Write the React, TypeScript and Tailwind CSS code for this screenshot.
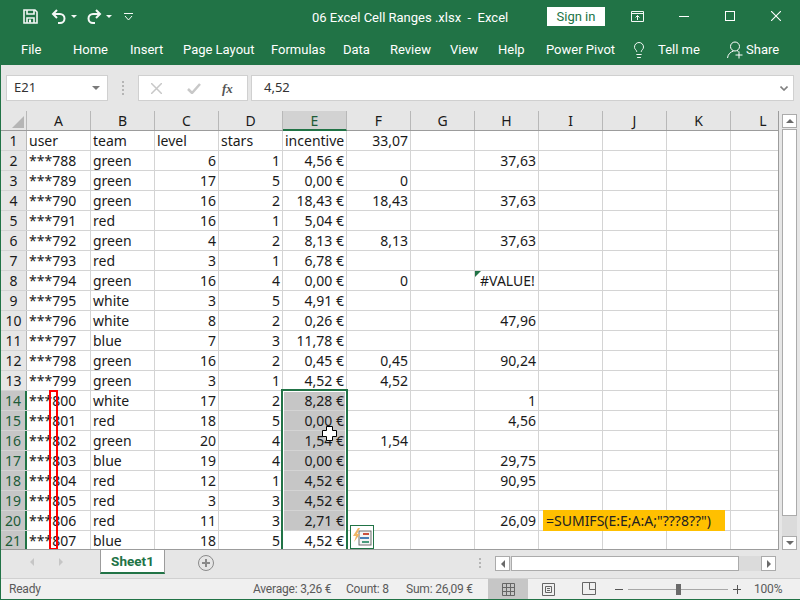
import { Lightbulb } from 'lucide-react'

const cols = ['A', 'B', 'C', 'D', 'E', 'F', 'G', 'H', 'I', 'J', 'K', 'L']
const tabs = [
  { label: 'Home', cls: 'w-[34px]' },
  { label: 'Insert', cls: 'w-[30px]' },
  { label: 'Page Layout', cls: 'w-[65px]' },
  { label: 'Formulas', cls: 'w-[49px]' },
  { label: 'Data', cls: 'w-[24px]' },
  { label: 'Review', cls: 'w-[37px]' },
  { label: 'View', cls: 'w-[25px]' },
  { label: 'Help', cls: 'w-[25px]' },
  { label: 'Power Pivot', cls: 'w-[63px]' },
]

type Row = [string, string, string, string, string, string?, string?]
const rows: Row[] = [
  ['user', 'team', 'level', 'stars', 'incentive', '33,07'],
  ['***788', 'green', '6', '1', '4,56 €', '', '37,63'],
  ['***789', 'green', '17', '5', '0,00 €', '0'],
  ['***790', 'green', '16', '2', '18,43 €', '18,43', '37,63'],
  ['***791', 'red', '16', '1', '5,04 €'],
  ['***792', 'green', '4', '2', '8,13 €', '8,13', '37,63'],
  ['***793', 'red', '3', '1', '6,78 €'],
  ['***794', 'green', '16', '4', '0,00 €', '0', '#VALUE!'],
  ['***795', 'white', '3', '5', '4,91 €'],
  ['***796', 'white', '8', '2', '0,26 €', '', '47,96'],
  ['***797', 'blue', '7', '3', '11,78 €'],
  ['***798', 'green', '16', '2', '0,45 €', '0,45', '90,24'],
  ['***799', 'green', '3', '1', '4,52 €', '4,52'],
  ['***800', 'white', '17', '2', '8,28 €', '', '1'],
  ['***801', 'red', '18', '5', '0,00 €', '', '4,56'],
  ['***802', 'green', '20', '4', '1,54 €', '1,54'],
  ['***803', 'blue', '19', '4', '0,00 €', '', '29,75'],
  ['***804', 'red', '12', '1', '4,52 €', '', '90,95'],
  ['***805', 'red', '3', '3', '4,52 €'],
  ['***806', 'red', '11', '3', '2,71 €', '', '26,09'],
  ['***807', 'blue', '18', '5', '4,52 €'],
]

function Cell({ text, right, sel, last, indent }: { text?: string; right?: boolean; sel?: boolean; last?: boolean; indent?: boolean }) {
  return (
    <div className={`h-full shrink-0 border-r border-[#d4d4d4] flex items-center whitespace-nowrap ${last ? 'w-[48px] border-r-0' : 'w-[64px]'} ${right ? 'justify-end pr-[2px]' : indent ? 'pl-[5px]' : 'pl-[2px]'} ${sel ? 'bg-[#c6c6c6] border-[#c6c6c6]' : ''}`}>
      {text}
    </div>
  )
}

function TitleBar() {
  return (
    <div className="h-[33px] shrink-0 flex items-center text-white relative">
      <div className="flex items-center pl-[23px]">
        <svg width="15" height="15" viewBox="0 0 15 15" fill="none" stroke="#f4f8f6" strokeWidth="1.6">
          <path d="M1 1h11l2 2v11H1z" />
          <path d="M4 1v4h7V1M4 14V9h7v5" />
          <rect x="6" y="10.5" width="2" height="3" fill="#f4f8f6" stroke="none" />
        </svg>
        <svg className="ml-[13px]" width="16" height="15" viewBox="0 0 16 15" fill="none" stroke="#f4f8f6" strokeWidth="2">
          <path d="M6 1L2 5l4 4" />
          <path d="M2 5h7a4.5 4.5 0 0 1 0 9H7" />
        </svg>
        <div className="ml-[4px] w-0 h-0 border-x-[3px] border-x-transparent border-t-[3px] border-t-[#f4f8f6]" />
        <svg className="ml-[9px]" width="16" height="15" viewBox="0 0 16 15" fill="none" stroke="#f4f8f6" strokeWidth="2">
          <path d="M10 1l4 4-4 4" />
          <path d="M14 5H7a4.5 4.5 0 0 0 0 9h2" />
        </svg>
        <div className="ml-[4px] w-0 h-0 border-x-[3px] border-x-transparent border-t-[3px] border-t-[#f4f8f6]" />
        <svg className="ml-[12px]" width="9" height="8" viewBox="0 0 9 8" fill="none" stroke="#f4f8f6" strokeWidth="1">
          <path d="M0 .5h9M1 3l3.500 4L8 3" />
        </svg>
      </div>
      <div className="absolute left-[312px] top-[9px] text-[13px] leading-[18px] whitespace-pre">06 Excel Cell Ranges .xlsx  -  Excel</div>
      <div className="absolute left-[547px] top-[7px] w-[58px] h-[19px] bg-white text-[#217346] text-[13px] leading-[20px] text-center">Sign in</div>
      <svg className="absolute left-[631px] top-[11px]" width="13" height="11" viewBox="0 0 13 11" fill="none" stroke="#f4f8f6">
        <path d="M.5.5h12v10H.5zM.5 2.500h12M6.500 9V4.500M4.500 6.500l2-2 2 2" />
      </svg>
      <div className="absolute left-[679px] top-[16px] w-[10px] h-px bg-white" />
      <div className="absolute left-[725px] top-[11px] w-[10px] h-[10px] border border-white" />
      <svg className="absolute left-[771px] top-[11px]" width="10" height="10" viewBox="0 0 10 10" stroke="#fff" strokeWidth="1.100">
        <path d="M0 0l10 10M10 0L0 10" />
      </svg>
    </div>
  )
}

function RibbonTabs() {
  return (
    <div className="h-[32px] shrink-0 flex items-center text-white text-[13px] relative pt-[2px]">
      <div className="w-[21px]" />
      <span className="w-[18px] whitespace-nowrap">File</span>
      <div className="w-[34px]" />
      <div className="flex gap-[23px]">
        {tabs.map(t => (
          <span key={t.label} className={`whitespace-nowrap ${t.cls}`}>{t.label}</span>
        ))}
      </div>
      <Lightbulb className="absolute left-[630px] top-[8px]" size={18} strokeWidth={1.25} />
      <span className="absolute left-[658px] top-[7px] whitespace-nowrap">Tell me</span>
      <svg className="absolute left-[727px] top-[8px]" width="17" height="18" viewBox="0 0 17 18" fill="none" stroke="#fff" strokeWidth="1">
        <circle cx="8" cy="5.500" r="4.500" />
        <path d="M.5 17c.5-4 3-6 6-7M10 9.500l1.500 1M12 10.500v7M8.500 14h7" />
      </svg>
      <span className="absolute left-[746px] top-[7px] whitespace-nowrap">Share</span>
    </div>
  )
}

function FormulaBar() {
  return (
    <div className="h-[46px] shrink-0 flex items-start pt-[10px] pl-[5px] pr-[5px] text-[14px] text-[#333] font-['Noto_Sans',sans-serif]">
      <div className="w-[102px] h-[26px] bg-white border border-[#d0d0d0] flex items-center justify-between pl-[7px] pr-[7px] text-[13px]">
        <span>E21</span>
        <div className="w-0 h-0 border-x-[4px] border-x-transparent border-t-[4px] border-t-[#7a7a7a]" />
      </div>
      <div className="w-[30px] h-[26px] flex flex-col items-center justify-center gap-[2px]">
        <div className="w-[2px] h-[2px] bg-[#b5b5b5]" />
        <div className="w-[2px] h-[2px] bg-[#b5b5b5]" />
        <div className="w-[2px] h-[2px] bg-[#b5b5b5]" />
        <div className="w-[2px] h-[2px] bg-[#b5b5b5]" />
      </div>
      <div className="w-[110px] h-[26px] bg-white border border-[#d0d0d0] flex items-center pl-[12px]">
        <svg width="11" height="11" viewBox="0 0 11 11" stroke="#c8c8c8" strokeWidth="1.500">
          <path d="M0 0l11 11M11 0L0 11" />
        </svg>
        <svg className="ml-[25px]" width="14" height="11" viewBox="0 0 14 11" fill="none" stroke="#c8c8c8" strokeWidth="2.500">
          <path d="M1 6l4 4 8-9" />
        </svg>
        <span className="ml-[21px] font-['Liberation_Serif',serif] italic text-[13px] font-bold text-[#555] leading-none">fx</span>
      </div>
      <div className="w-[3px]" />
      <div className="flex-1 h-[26px] bg-white border border-[#d0d0d0] flex items-center justify-between pl-[12px] pr-[5px] mr-px text-[13px]">
        <span>4,52</span>
        <svg width="8" height="5" viewBox="0 0 8 5" fill="none" stroke="#808080" strokeWidth="1.600">
          <path d="M.5.5L4 4 7.500.5" />
        </svg>
      </div>
    </div>
  )
}

function Sheet() {
  return (
    <div className="relative w-[778px] h-[439px] shrink-0 overflow-hidden border-r border-b border-[#9c9c9c] text-[14px] text-[#1a1a1a] font-['Noto_Sans',sans-serif]">
      <div className="h-[20px] flex border-b border-[#9c9c9c]">
        <div className="w-[26px] shrink-0 flex items-end justify-end border-r border-[#b8b8b8] pr-[2px] pb-[2px]">
          <div className="w-0 h-0 border-l-[12px] border-l-transparent border-b-[12px] border-b-[#b5b5b5]" />
        </div>
        {cols.map(c => (
          <div key={c} className={`shrink-0 flex items-center justify-center ${c === 'L' ? 'w-[48px] pl-[16px]' : 'w-[64px] border-r border-[#b8b8b8]'} ${c === 'E' ? 'bg-[#d2d2d2] text-[#1d5b38] border-b-2 border-b-[#217346] h-[20px]' : ''}`}>
            {c}
          </div>
        ))}
      </div>
      <div className="bg-white">
        {rows.map((r, i) => {
          const n = i + 1
          const picked = n >= 14
          return (
            <div key={n} className="h-[20px] flex border-b border-[#d4d4d4]">
              <div className={`w-[26px] shrink-0 flex items-center justify-center border-r ${picked ? 'bg-[#c6c6c6] text-[#1d5b38] border-r-2 border-r-[#217346]' : 'bg-[#e6e6e6] border-[#b8b8b8]'}`}>{n}</div>
              <Cell text={r[0]} />
              <Cell text={r[1]} />
              <Cell text={r[2]} right={n > 1} />
              <Cell text={r[3]} right={n > 1} />
              <Cell text={r[4]} right={n > 1} sel={n >= 14 && n <= 20} />
              <Cell text={r[5]} right />
              <Cell />
              <Cell text={r[6]} right={r[6] !== '#VALUE!'} indent />
              <Cell />
              <Cell />
              <Cell />
              <Cell last />
            </div>
          )
        })}
      </div>

      {/* green error marker on H8 */}
      <div className="absolute left-[474px] top-[160px] w-0 h-0 border-r-[6px] border-r-transparent border-t-[6px] border-t-[#217346]" />
      {/* selection E14:E21 */}
      <div className="absolute left-[280px] top-[278px] w-[67px] h-[170px] border-2 border-[#217346] shadow-[inset_0_0_0_1px_white]" />
      {/* red column marker */}
      <div className="absolute left-[48px] top-[279px] w-[9px] h-[160px] border-2 border-[#ff0000]" />
      {/* formula note */}
      <div className="absolute left-[542px] top-[399px] w-[182px] h-[21px] bg-[#ffc000] pl-[3px] flex items-center whitespace-nowrap text-[#222]">=SUMIFS(E:E;A:A;"???8??")</div>
      {/* quick analysis */}
      <div className="absolute left-[349px] top-[414px] w-[24px] h-[24px] bg-white border border-[#217346] flex items-center justify-center">
        <svg width="20" height="18" viewBox="0 0 20 18">
          <rect x="7" y="3" width="12" height="14" fill="#f4f4f4" stroke="#6e6e6e" />
          <path d="M11 6h6" stroke="#c94f3c" strokeWidth="2" />
          <path d="M8 10h9" stroke="#4a7fb5" strokeWidth="2" />
          <path d="M10 14h7" stroke="#4a9b7d" strokeWidth="2" />
          <path d="M6 0L1 8h3l-2 6 6-8H5l3-6z" fill="#f0b665" />
        </svg>
      </div>
      {/* cell cursor */}
      <svg className="absolute left-[321px] top-[315px]" width="15" height="15" viewBox="0 0 15 15">
        <path d="M4.500.5h6v4h4v6h-4v4h-6v-4h-4v-6h4z" fill="#fff" stroke="#000" />
      </svg>
    </div>
  )
}

function VScroll() {
  return (
    <div className="flex-1 flex flex-col pt-[3px] pl-[3px] pr-[3px] h-[439px]">
      <div className="h-[14px] shrink-0 bg-white border border-[#ababab] flex items-center justify-center">
        <div className="w-0 h-0 border-x-[4px] border-x-transparent border-b-[4px] border-b-[#6a6a6a]" />
      </div>
      <div className="h-[387px] shrink-0 bg-white border border-[#ababab] mt-px" />
      <div className="flex-1 bg-[#dbdbdb]" />
      <div className="h-[14px] shrink-0 bg-white border border-[#ababab] flex items-center justify-center">
        <div className="w-0 h-0 border-x-[4px] border-x-transparent border-t-[4px] border-t-[#6a6a6a]" />
      </div>
    </div>
  )
}

function TabBar() {
  return (
    <div className="h-[28px] shrink-0 flex items-start relative">
      <div className="w-[29px]" />
      <div className="mt-[8px] w-0 h-0 border-y-[4px] border-y-transparent border-r-[4px] border-r-[#c6c6c6]" />
      <div className="w-[25px]" />
      <div className="mt-[8px] w-0 h-0 border-y-[4px] border-y-transparent border-l-[4px] border-l-[#c6c6c6]" />
      <div className="w-[37px]" />
      <div className="w-[65px] h-[24px] bg-white border-x border-[#9c9c9c] border-b-2 border-b-[#217346] text-[#217346] text-[13.5px] font-bold flex items-center justify-center">Sheet1</div>
      <div className="ml-[33px] mt-[5px] w-[16px] h-[16px] rounded-full border border-[#8a8a8a] flex items-center justify-center relative">
        <div className="w-[8px] h-[2px] bg-[#8a8a8a]" />
        <div className="absolute w-[2px] h-[8px] bg-[#8a8a8a]" />
      </div>
      <div className="ml-[265px] mt-[8px] flex flex-col gap-[2px]">
        <div className="w-[2px] h-[2px] bg-[#b5b5b5]" />
        <div className="w-[2px] h-[2px] bg-[#b5b5b5]" />
        <div className="w-[2px] h-[2px] bg-[#b5b5b5]" />
      </div>
      <div className="ml-[14px] mt-[6px] w-[281px] h-[15px] flex bg-[#dbdbdb]">
        <div className="w-[15px] bg-white border border-[#ababab] flex items-center justify-center">
          <div className="w-0 h-0 border-y-[4px] border-y-transparent border-r-[4px] border-r-[#6a6a6a]" />
        </div>
        <div className="w-[228px] bg-white border border-[#ababab] ml-px" />
        <div className="flex-1" />
        <div className="w-[15px] bg-white border border-[#ababab] flex items-center justify-center">
          <div className="w-0 h-0 border-y-[4px] border-y-transparent border-l-[4px] border-l-[#6a6a6a]" />
        </div>
      </div>
    </div>
  )
}

function StatusBar() {
  return (
    <div className="h-[21px] shrink-0 border-t border-[#d0d0d0] bg-[#f0f0f0] flex items-center text-[12px] tracking-[-0.2px] text-[#5a5a5a] relative">
      <span className="absolute left-[8px]">Ready</span>
      <span className="absolute left-[252px]">Average: 3,26 €</span>
      <span className="absolute left-[345px]">Count: 8</span>
      <span className="absolute left-[405px]">Sum: 26,09 €</span>
      <div className="absolute left-[487px] top-0 w-[40px] h-[20px] bg-[#c6c6c6] flex items-center justify-center">
        <svg width="13" height="13" viewBox="0 0 13 13" fill="none" stroke="#666">
          <path d="M.5.5h12v12H.5zM4.500.5v12M8.500.5v12M.5 4.500h12M.5 8.500h12" />
        </svg>
      </div>
      <svg className="absolute left-[541px] top-[4px]" width="13" height="13" viewBox="0 0 13 13" fill="none" stroke="#666">
        <path d="M.5.5h12v12H.5zM3.500 3.500h6v6h-6zM5 5.500h3M5 7.500h3" />
      </svg>
      <svg className="absolute left-[581px] top-[3px]" width="14" height="13" viewBox="0 0 14 13" fill="none" stroke="#666">
        <path d="M.5.500h13v12H.5zM7.500.5v7M7.500 7.500h6" />
      </svg>
      <div className="absolute left-[614px] top-[10px] w-[8px] h-px bg-[#555]" />
      <div className="absolute left-[627px] top-[10px] w-[100px] h-px bg-[#a8a8a8]" />
      <div className="absolute left-[675px] top-[5px] w-[5px] h-[11px] bg-[#6a6a6a]" />
      <div className="absolute left-[732px] top-[10px] w-[8px] h-px bg-[#555]" />
      <div className="absolute left-[736px] top-[6px] w-px h-[9px] bg-[#555]" />
      <span className="absolute left-[753px]">100%</span>
    </div>
  )
}

export default function App() {
  return (
    <div className="w-[800px] h-[600px] overflow-hidden flex flex-col bg-[#217346] font-['Roboto',sans-serif]">
      <TitleBar />
      <RibbonTabs />
      <div className="flex-1 min-h-0 flex flex-col ml-px mb-px bg-[#e6e6e6]">
        <FormulaBar />
        <div className="flex shrink-0">
          <Sheet />
          <VScroll />
        </div>
        <TabBar />
        <StatusBar />
      </div>
    </div>
  )
}
